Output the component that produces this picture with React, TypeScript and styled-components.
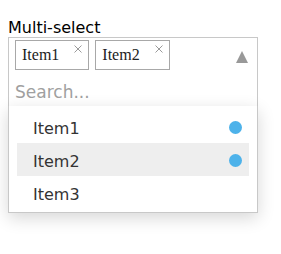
import React from "react";
import styled, { createGlobalStyle } from "styled-components";

const Global = createGlobalStyle`
  html, body { margin: 0; padding: 0; background: #fff; }
  body { font-family: "DejaVu Sans", sans-serif; }
`;

const Page = styled.div`
  padding: 18px 8px 42px 8px;
`;

const Label = styled.div`
  font-size: 16px;
  line-height: 19px;
  color: #000;
`;

const Field = styled.div`
  width: 250px;
`;

const Control = styled.div`
  box-sizing: border-box;
  width: 250px;
  border: 1px solid #c8c8c8;
  border-bottom: none;
  background: #fff;
`;

const TagRow = styled.div`
  display: flex;
  align-items: center;
  gap: 6px;
  padding: 2px 9px 2px 6px;
`;

const Tag = styled.div`
  box-sizing: border-box;
  height: 30px;
  display: flex;
  align-items: center;
  padding: 0 6px;
  border: 1px solid #a8a8a8;
  font-family: "Liberation Serif", serif;
  font-size: 16px;
  color: #222;
`;

const Remove = styled.svg`
  align-self: flex-start;
  margin-top: 4px;
  margin-left: 15px;
  width: 8px;
  height: 8px;
`;

const Arrow = styled.svg`
  margin-left: auto;
  margin-top: 3px;
  width: 12px;
  height: 12px;
`;

const Search = styled.input`
  display: block;
  box-sizing: border-box;
  width: 100%;
  height: 34px;
  border: none;
  outline: none;
  padding: 6px 6px 0 6px;
  font-family: "DejaVu Sans", sans-serif;
  font-size: 17px;
  color: #333;
  background: transparent;
  &::placeholder { color: #a0a0a0; }
`;

const Menu = styled.ul`
  position: relative;
  z-index: 2;
  box-sizing: border-box;
  width: 250px;
  margin: 0;
  padding: 4px 8px 3px 8px;
  list-style: none;
  background: #fff;
  border: 1px solid #c8c8c8;
  border-top: none;
  box-shadow: 0 5px 16px rgba(0, 0, 0, 0.16);
`;

const Option = styled.li<{ $active?: boolean }>`
  display: flex;
  align-items: center;
  height: 33px;
  padding: 0 7px 0 16px;
  background: ${(p) => (p.$active ? "#eeeeee" : "transparent")};
  font-size: 16px;
  color: #333;
`;

const OptionText = styled.span`
  margin-top: 4px;
`;

const Dot = styled.span`
  margin-left: auto;
  margin-top: 2px;
  width: 13px;
  height: 13px;
  border-radius: 50%;
  background: #4db2ea;
`;

const tags = ["Item1", "Item2"];
const options = [
  { label: "Item1", selected: true, active: false },
  { label: "Item2", selected: true, active: true },
  { label: "Item3", selected: false, active: false },
];

export default function App() {
  return (
    <Page>
      <Global />
      <Label>Multi-select</Label>
      <Field>
        <Control>
          <TagRow>
            {tags.map((t) => (
              <Tag key={t}>
                {t}
                <Remove viewBox="0 0 8 8">
                  <path d="M0.5 0.5 L7.5 7.5 M7.5 0.5 L0.5 7.5" stroke="#9a9a9a" strokeWidth="1" fill="none" />
                </Remove>
              </Tag>
            ))}
            <Arrow viewBox="0 0 12 12">
              <polygon points="6,0 12,12 0,12" fill="#999" />
            </Arrow>
          </TagRow>
          <Search placeholder="Search..." readOnly />
        </Control>
        <Menu>
          {options.map((o) => (
            <Option key={o.label} $active={o.active}>
              <OptionText>{o.label}</OptionText>
              {o.selected && <Dot />}
            </Option>
          ))}
        </Menu>
      </Field>
    </Page>
  );
}
